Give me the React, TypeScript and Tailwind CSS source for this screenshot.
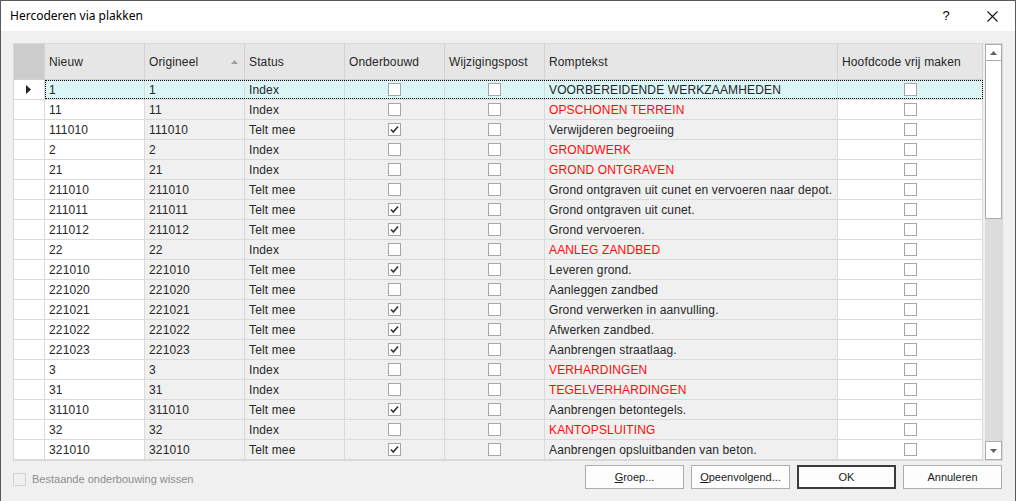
import React from 'react';

type Row = {
  nieuw: string;
  orig: string;
  status: string;
  onder: boolean;
  tekst: string;
  red: boolean;
};

const rows: Row[] = [
  { nieuw: '1', orig: '1', status: 'Index', onder: false, tekst: 'VOORBEREIDENDE WERKZAAMHEDEN', red: true },
  { nieuw: '11', orig: '11', status: 'Index', onder: false, tekst: 'OPSCHONEN TERREIN', red: true },
  { nieuw: '111010', orig: '111010', status: 'Telt mee', onder: true, tekst: 'Verwijderen begroeiing', red: false },
  { nieuw: '2', orig: '2', status: 'Index', onder: false, tekst: 'GRONDWERK', red: true },
  { nieuw: '21', orig: '21', status: 'Index', onder: false, tekst: 'GROND ONTGRAVEN', red: true },
  { nieuw: '211010', orig: '211010', status: 'Telt mee', onder: false, tekst: 'Grond ontgraven uit cunet en vervoeren naar depot.', red: false },
  { nieuw: '211011', orig: '211011', status: 'Telt mee', onder: true, tekst: 'Grond ontgraven uit cunet.', red: false },
  { nieuw: '211012', orig: '211012', status: 'Telt mee', onder: true, tekst: 'Grond vervoeren.', red: false },
  { nieuw: '22', orig: '22', status: 'Index', onder: false, tekst: 'AANLEG ZANDBED', red: true },
  { nieuw: '221010', orig: '221010', status: 'Telt mee', onder: true, tekst: 'Leveren grond.', red: false },
  { nieuw: '221020', orig: '221020', status: 'Telt mee', onder: false, tekst: 'Aanleggen zandbed', red: false },
  { nieuw: '221021', orig: '221021', status: 'Telt mee', onder: true, tekst: 'Grond verwerken in aanvulling.', red: false },
  { nieuw: '221022', orig: '221022', status: 'Telt mee', onder: true, tekst: 'Afwerken zandbed.', red: false },
  { nieuw: '221023', orig: '221023', status: 'Telt mee', onder: true, tekst: 'Aanbrengen straatlaag.', red: false },
  { nieuw: '3', orig: '3', status: 'Index', onder: false, tekst: 'VERHARDINGEN', red: true },
  { nieuw: '31', orig: '31', status: 'Index', onder: false, tekst: 'TEGELVERHARDINGEN', red: true },
  { nieuw: '311010', orig: '311010', status: 'Telt mee', onder: true, tekst: 'Aanbrengen betontegels.', red: false },
  { nieuw: '32', orig: '32', status: 'Index', onder: false, tekst: 'KANTOPSLUITING', red: true },
  { nieuw: '321010', orig: '321010', status: 'Telt mee', onder: true, tekst: 'Aanbrengen opsluitbanden van beton.', red: false },
];

function Check({ on }: { on: boolean }) {
  return (
    <div className="w-[13px] h-[13px] border border-[#a6a6a6] bg-white flex items-center justify-center">
      {on && (
        <svg width="9" height="9" viewBox="0 0 9 9">
          <path d="M1 4.5 L3.3 7 L8 1.5" stroke="#333" strokeWidth="1.6" fill="none" />
        </svg>
      )}
    </div>
  );
}

export default function App() {
  const cell = 'h-full border-r border-[#dadada] flex items-center px-[4px] whitespace-nowrap overflow-hidden tracking-[0.14px]';
  const hdr = 'h-full border-r border-[#d2d2d2] flex items-center px-[4px] whitespace-nowrap tracking-[0.14px]';
  const btn = 'w-[99px] h-[24px] bg-[#fdfdfd] border border-[#adadad] text-[#1a1a1a] text-[11px]';

  return (
    <div className="w-[1016px] h-[501px] bg-[#f0f0f0] border-l border-t border-r border-[#5a5a5a] flex flex-col text-[12px] text-[#262626] overflow-hidden" style={{ fontFamily: '"Liberation Sans", Arial, sans-serif' }}>
      {/* titel */}
      <div className="h-[30px] bg-white flex items-center shrink-0">
        <span className="pl-[9px] text-[12px] text-black flex-1" style={{ fontFamily: '"Noto Sans", "Liberation Sans", sans-serif' }}>Hercoderen via plakken</span>
        <span className="w-[46px] text-center text-[13px] text-black">?</span>
        <div className="w-[46px] flex justify-center">
          <svg width="11" height="11" viewBox="0 0 11 11">
            <path d="M0.5 0.5 L10.5 10.5 M10.5 0.5 L0.5 10.5" stroke="#111" strokeWidth="1.1" />
          </svg>
        </div>
      </div>

      <div className="pl-[12px] pr-[12px] pt-[12px] flex flex-col">
        {/* grid */}
        <div className="w-[990px] h-[418px] border border-[#d8d8d8] bg-[#f0f0f0] flex">
          <div className="w-[969px] flex flex-col">
            <div className="h-[36px] flex bg-[#e6e6e6] border-b border-[#d0d0d0] shrink-0">
              <div className="w-[31px] h-full bg-[#cccccc] border-r border-[#d2d2d2]" />
              <div className={`w-[100px] ${hdr}`}>Nieuw</div>
              <div className={`w-[100px] ${hdr} justify-between`}>
                <span>Origineel</span>
                <svg width="7" height="4" viewBox="0 0 7 4" className="mr-[2px]">
                  <path d="M0 4 L3.5 0 L7 4 Z" fill="#a0a0a0" />
                </svg>
              </div>
              <div className={`w-[100px] ${hdr}`}>Status</div>
              <div className={`w-[100px] ${hdr}`}>Onderbouwd</div>
              <div className={`w-[100px] ${hdr}`}>Wijzigingspost</div>
              <div className={`w-[293px] ${hdr}`}>Romptekst</div>
              <div className={`w-[145px] ${hdr}`}>Hoofdcode vrij maken</div>
            </div>

            {rows.map((r, i) => {
              const sel = i === 0;
              return (
                <div key={i} className="h-[20px] flex border-b border-[#dadada] shrink-0">
                  <div className="w-[31px] h-full bg-white border-r border-[#dadada] flex items-center pl-[12px]">
                    {sel && (
                      <svg width="5" height="9" viewBox="0 0 5 9">
                        <path d="M0 0 L5 4.5 L0 9 Z" fill="#222" />
                      </svg>
                    )}
                  </div>
                  <div className={`flex h-full ${sel ? 'bg-[#dbf4f5] outline-1 outline-dotted outline-black -outline-offset-1' : ''}`}>
                    <div className={`w-[100px] ${cell} ${sel ? '' : 'bg-white'}`}>{r.nieuw}</div>
                    <div className={`w-[100px] ${cell}`}>{r.orig}</div>
                    <div className={`w-[100px] ${cell}`}>{r.status}</div>
                    <div className={`w-[100px] ${cell} justify-center`}><Check on={r.onder} /></div>
                    <div className={`w-[100px] ${cell} justify-center`}><Check on={false} /></div>
                    <div className={`w-[293px] ${cell} ${r.red && !sel ? 'text-[#ff0a0a]' : ''}`}>{r.tekst}</div>
                    <div className={`w-[145px] ${cell} justify-center ${sel ? '' : 'bg-white'}`}><Check on={false} /></div>
                  </div>
                </div>
              );
            })}
          </div>

          {/* scrollbalk */}
          <div className="ml-[2px] w-[17px] h-full bg-[#dcdcdc] flex flex-col">
            <div className="h-[17px] bg-white border border-[#acacac] flex items-center justify-center shrink-0">
              <svg width="7" height="4" viewBox="0 0 7 4">
                <path d="M0 4 L3.5 0 L7 4 Z" fill="#606060" />
              </svg>
            </div>
            <div className="h-[158px] bg-white border border-[#acacac] border-t-0 shrink-0" />
            <div className="flex-1" />
            <div className="h-[19px] bg-white border border-[#acacac] flex items-center justify-center shrink-0">
              <svg width="7" height="4" viewBox="0 0 7 4">
                <path d="M0 0 L7 0 L3.5 4 Z" fill="#606060" />
              </svg>
            </div>
          </div>
        </div>

        {/* onderkant */}
        <div className="flex items-center mt-[4px] h-[24px]">
          <div className="w-[13px] h-[13px] border border-[#d2d2d2] bg-[#f0f0f0] mt-[5px]" />
          <span className="ml-[6px] text-[#8e8e8e] text-[11px] mt-[5px]">Bestaande onderbouwing wissen</span>
          <div className="flex-1" />
          <div className="flex gap-[7px] mr-[1px]">
            <button className={btn}><span className="underline">G</span>roep...</button>
            <button className={btn}><span className="underline">O</span>peenvolgend...</button>
            <button className="w-[99px] h-[24px] bg-[#fdfdfd] border-2 border-[#3c3c3c] text-[#1a1a1a] text-[11px]">OK</button>
            <button className={btn}>Annuleren</button>
          </div>
        </div>
      </div>
    </div>
  );
}
